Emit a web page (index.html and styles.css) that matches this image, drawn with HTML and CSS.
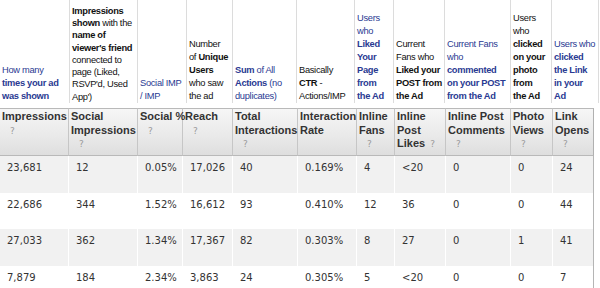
FILE: index.html
```html
<!DOCTYPE html>
<html>
<head>
<meta charset="utf-8">
<link rel="stylesheet" href="styles.css">
</head>
<body>
<div class="notes">
  <div class="note w1 blue"><p class="nt">How many<br><b>times your ad</b><br><b>was shown</b></p></div>
  <div class="note w2 tight"><p class="nt"><b>Impressions</b><br><b>shown</b> with the<br><b>name of</b><br><b>viewer's friend</b><br>connected to<br>page (Liked,<br>RSVP'd, Used<br>App')</p></div>
  <div class="note w3 blue"><p class="nt">Social IMP<br>/ IMP</p></div>
  <div class="note w4"><p class="nt">Number<br>of <b>Unique</b><br><b>Users</b><br>who saw<br>the ad</p></div>
  <div class="note w5 blue"><p class="nt"><b>Sum</b> of All<br><b>Actions</b> (no<br>duplicates)</p></div>
  <div class="note w6"><p class="nt">Basically<br><b>CTR</b> -<br>Actions/IMP</p></div>
  <div class="note w7 blue"><p class="nt">Users<br>who<br><b>Liked</b><br><b>Your</b><br><b>Page</b><br><b>from</b><br><b>the Ad</b></p></div>
  <div class="note w8"><p class="nt">Current<br>Fans who<br><b>Liked your</b><br><b>POST from</b><br><b>the Ad</b></p></div>
  <div class="note w9 blue"><p class="nt">Current Fans<br>who<br><b>commented</b><br><b>on your POST</b><br><b>from the Ad</b></p></div>
  <div class="note w10"><p class="nt">Users<br>who<br><b>clicked</b><br><b>on your</b><br><b>photo</b><br><b>from</b><br><b>the Ad</b></p></div>
  <div class="note w11 blue"><p class="nt">Users who<br><b>clicked</b><br><b>the Link</b><br><b>in your</b><br><b>Ad</b></p></div>
</div>
<table class="report">
  <thead>
    <tr>
      <th class="c1">Impressions<br><span class="q">?</span></th>
      <th class="c2">Social<br>Impressions<br><span class="q">?</span></th>
      <th class="c3">Social %<br><span class="q">?</span></th>
      <th class="c4">Reach<br><span class="q">?</span></th>
      <th class="c5">Total<br>Interactions<br><span class="q">?</span></th>
      <th class="c6">Interaction<br>Rate</th>
      <th class="c7">Inline<br>Fans<br><span class="q">?</span></th>
      <th class="c8">Inline<br>Post<br>Likes<span class="q qi">?</span></th>
      <th class="c9">Inline Post<br>Comments<br><span class="q">?</span></th>
      <th class="c10">Photo<br>Views<br><span class="q">?</span></th>
      <th class="c11">Link<br>Opens<br><span class="q">?</span></th>
    </tr>
  </thead>
  <tbody>
    <tr class="odd"><td>23,681</td><td>12</td><td>0.05%</td><td>17,026</td><td>40</td><td>0.169%</td><td>4</td><td>&lt;20</td><td>0</td><td>0</td><td>24</td></tr>
    <tr><td>22,686</td><td>344</td><td>1.52%</td><td>16,612</td><td>93</td><td>0.410%</td><td>12</td><td>36</td><td>0</td><td>0</td><td>44</td></tr>
    <tr class="odd"><td>27,033</td><td>362</td><td>1.34%</td><td>17,367</td><td>82</td><td>0.303%</td><td>8</td><td>27</td><td>0</td><td>1</td><td>41</td></tr>
    <tr><td>7,879</td><td>184</td><td>2.34%</td><td>3,863</td><td>24</td><td>0.305%</td><td>5</td><td>&lt;20</td><td>0</td><td>0</td><td>7</td></tr>
  </tbody>
</table>
</body>
</html>
```

FILE: styles.css
```css
* { box-sizing: border-box; }
html, body { margin: 0; padding: 0; background: #fff; }
body { width: 600px; height: 288px; overflow: hidden; }

.notes {
  display: flex;
  height: 103px;
}
.note {
  display: flex;
  align-items: flex-end;
  border-right: 1px solid #dcdcdc;
  padding-left: 2px;
  font: 9.3px/13px "Liberation Sans", Arial, sans-serif;
  letter-spacing: -0.3px;
  color: #111;
  white-space: nowrap;
  overflow: visible;
}
.nt { margin: 0; }
.note b { font-weight: bold; }
.note.blue { color: #2a3a92; }
.note.tight { line-height: 12.3px; }
.w1 { width: 70px; }
.w2 { width: 68px; }
.w3 { width: 49px; }
.w4 { width: 46px; }
.w5 { width: 64px; }
.w6 { width: 58px; }
.w7 { width: 39px; }
.w8 { width: 51px; }
.w9 { width: 66px; }
.w10 { width: 41px; }
.w11 { width: 47px; }

.report {
  margin-top: 5px;
  border-collapse: separate;
  border-spacing: 0;
  table-layout: fixed;
  width: 594px;
}
.report th {
  height: 48px;
  padding: 1px 2px 0;
  vertical-align: top;
  text-align: left;
  white-space: nowrap;
  font: bold 11px/13.5px "Liberation Sans", Arial, sans-serif;
  color: #333;
  background: linear-gradient(#f6f6f6, #e9e9e9 60%, #dedede);
  border-top: 1px solid #b9b9b9;
  border-bottom: 1px solid #b9b9b9;
  border-right: 1px solid #c6c6c6;
}
.report th.c11 { border-right-color: #b0b0b0; }
.q {
  display: inline-block;
  margin-left: 8px;
  font: normal 9px/13px "DejaVu Sans", sans-serif;
  color: #9a9a9a;
}
.q.qi { margin-left: 5px; }

.c1 { width: 69px; }
.c2 { width: 69px; }
.c3 { width: 45px; }
.c4 { width: 50px; }
.c5 { width: 65px; }
.c6 { width: 59px; }
.c7 { width: 38px; }
.c8 { width: 51px; }
.c9 { width: 65px; }
.c10 { width: 42px; }
.c11 { width: 41px; }

.report td {
  height: 36.7px;
  padding: 5px 7px 0;
  vertical-align: top;
  font: 10px/13px "DejaVu Sans", sans-serif;
  color: #333;
  border-right: 1px solid #fff;
  white-space: nowrap;
}
.report tr.odd td { background: #f1f1f1; }
.report td:last-child { border-right: 1px solid #b5b5b5; }
```
